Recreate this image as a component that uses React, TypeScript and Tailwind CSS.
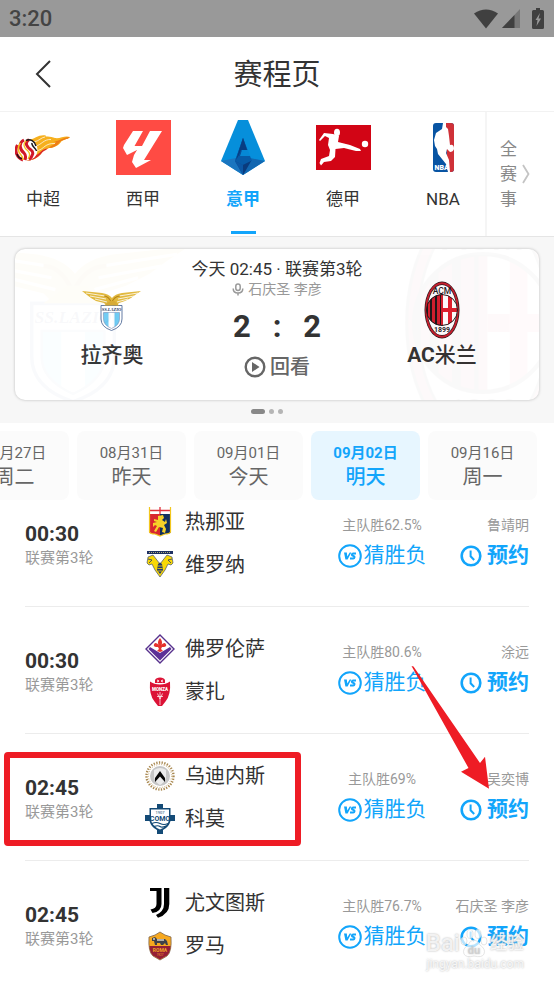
import React, { useState } from 'react';

type IconProps = { className?: string };

/* ---------- league logos ---------- */

const CslLogo = () => (
  <svg viewBox="0 0 56 28" className="w-14 h-7">
    <path d="M13 6 C20 5 24 0 31 1.500 C28 3 36 2 40 4 C45 5 50 1 55 3 C52 6 48 5 46 8 C43 12 38 14 34 14 C31 16 28 15 26 20 C22 24 19 26 12 27 Z" fill="#f6b01e" />
    <path d="M36 7 C43 9 47 3 55 3 C52 6 48 5 45 8 C42 12 38 14 33 14 C38 11 40 10 41 8 Z" fill="#ee7d16" />
    <path d="M21 21 C26 19 26 15 33 14.500 C30 17 28 17 26 20 C22 24 18 26 12 27 Z" fill="#dc2a28" />
    <path d="M21 12 C26 11 29 5 36 5.500 M23 16.500 C29 15 30 9 40 9.500 M19 8 C24 7 26 3.500 30 3" fill="none" stroke="#fff" strokeWidth=".7" />
    <ellipse cx="11.500" cy="16" rx="11" ry="10.500" fill="#fff" />
    <path d="M2.500 11 C-1 17 2 24 8 26 M9 6 C3 9 5 16 9 19 C11 21 11 23 10 26 M14 5.500 C9 9 12 13 16 16 C19 18 18 22 14 25.500" fill="none" stroke="#d1182a" strokeWidth="3" />
    <path d="M5.500 9 C2 13 3 18 6 21 C8 23 8 24 8 26" fill="none" stroke="#f4c01e" strokeWidth="1.500" />
    <path d="M12 6 C7 10 9 14 13 17 C15 19 15 22 13 25" fill="none" stroke="#f4c01e" strokeWidth="1.300" />
    <path d="M11 6.500 C15 4.500 20 7 21 12 M17 9 C16 12 21 14 21.500 17 M2 20 C3 23 5 24.500 7 24.500" fill="none" stroke="#1c1718" strokeWidth="1.500" />
  </svg>
);

const LaLigaLogo = () => (
  <svg viewBox="0 0 55 55" className="size-[55px]">
    <rect width="55" height="55" fill="#ff4b44" />
    <path d="M17 11 H27 L18.500 26 H26 L34 11 H46 L28 40 H35 L20 48 L16 42 L18 35 L21 30 L11 35 L7 28 L8 25 Z" fill="#fff" />
  </svg>
);

const SerieALogo = () => (
  <svg viewBox="0 0 44 55" className="w-11 h-[55px]">
    <path d="M17 0 H27 L44 41 L22 55 L0 41 Z" fill="#068fdb" />
    <path d="M0 41 L15 38 L22 55 Z" fill="#1a75bf" />
    <path d="M44 41 L29 38 L22 55 Z" fill="#1267b1" />
    <path d="M14 41 L22 18 L30 41 L22 55 Z" fill="#0a4b94" />
    <path d="M22 18 L27 31 H20 L18 36 H29 L31 41 L22 45 L14 41 Z" fill="#075ba8" />
    <path d="M22 18 L26 30 H20 L18 35 L15 40 Z" fill="#083d82" />
    <path d="M14 41 L22 45 L22 55 Z" fill="#0b57a5" />
    <path d="M30 41 L22 45 V55 Z" fill="#0a3b7d" />
    <path d="M21 30 H27 L29 36 H19 Z" fill="#0688d5" />
  </svg>
);

const BundesligaLogo = () => (
  <svg viewBox="0 0 55 45" className="w-[55px] h-[45px]">
    <rect width="55" height="45" fill="#d20515" />
    <ellipse cx="21" cy="7.500" rx="3" ry="3.800" fill="#fff" />
    <circle cx="49" cy="19" r="3.200" fill="#fff" />
    <path d="M17 9 L23 11 L22 17 L34 20 L44 24 L45 26 L40 26 L28 23 L19.500 24 L19 32 L15 36 L8 37 L5 40.500 L3.500 38 L5 34 L13 31 L14 25 L12 20 L13 13 L9 11 L4 16 L3 15 L8 8 Z" fill="#fff" />
  </svg>
);

const NbaLogo = () => (
  <svg viewBox="0 0 21 49" className="w-[21px] h-[49px]">
    <rect width="21" height="49" rx="3" fill="#0854a3" />
    <path d="M12 0 H18 Q21 0 21 3 V46 Q21 49 18 49 H15 Z" fill="#cf3138" />
    <path d="M10 0 H13 V4 L15 6 L16 13 L17 22 Q21 21 21 26 Q20 29 17 29 L14 26 L13 30 L16 37 L17 49 H15 L13 41 L5 31 L4 26 L2 23 L1 17 L3 10 L9 6 Z" fill="#fff" />
    <text x="1.500" y="46.500" fontSize="7" fontWeight="900" fill="#fff" fontFamily="Roboto, sans-serif">NBA</text>
  </svg>
);

/* ---------- club crests ---------- */

const LazioCrest = ({ className }: IconProps) => (
  <svg viewBox="0 0 60 40" className={className}>
    <path d="M0 0 L20 2 Q27 3 30 7 Q33 3 40 2 L59 0 L53 4 L49 7 L43 10 L37 12 L34 15 H25 L22 12 L14 10 L9 7 L5 4 Z" fill="#e2b93f" />
    <path d="M4 2 L23 5 M8 5 L24 8 M13 8 L25 11 M56 2 L37 5 M52 5 L36 8 M46 8 L35 11" stroke="#fff" strokeWidth=".8" />
    <path d="M22 5 Q27 5 30 13 M38 5 Q32 5 29 13" stroke="#b8881a" strokeWidth="1.200" fill="none" />
    <path d="M19 14.500 H40 V28 Q40 36 29.500 39.500 Q19 36 19 28 Z" fill="#fff" stroke="#526c98" strokeWidth=".9" />
    <text x="29.500" y="19.500" fontSize="4.500" fontWeight="700" fontStyle="italic" textAnchor="middle" fill="#24365e" fontFamily="Liberation Serif, serif">SS.LAZIO</text>
    <path d="M21.500 21.500 H26.500 V36 Q21.500 33 21.500 28 Z M32.500 21.500 H37.500 V28 Q37.500 33 32.500 36 Z" fill="#6ecbf3" />
    <path d="M21.500 21.500 H37.500 V28 Q37.500 34 29.500 37.500 Q21.500 34 21.500 28 Z" fill="none" stroke="#7b8fb5" strokeWidth=".6" />
    <path d="M22 14.500 L28 10 H33 L37 14.500 Z" fill="#dcae33" />
  </svg>
);

const MilanCrest = ({ className }: IconProps) => (
  <svg viewBox="0 0 36 58" className={className}>
    <ellipse cx="18" cy="29" rx="17.500" ry="28.500" fill="#251a1d" />
    <ellipse cx="18" cy="29" rx="16.800" ry="27.800" fill="#c8202f" />
    <ellipse cx="18" cy="29" rx="15" ry="25.700" fill="#251a1d" />
    <ellipse cx="18" cy="29" rx="14.400" ry="25.100" fill="#fff" />
    <clipPath id="milanDisc">
      <ellipse cx="18" cy="29" rx="15.500" ry="15.500" />
    </clipPath>
    <g clipPath="url(#milanDisc)">
      <rect x="2" y="13" width="17" height="32" fill="#1d1719" />
      <path d="M4 13h2v32h-2z M8 13h3v32h-3z M13 13h3v32h-3z M17 13h2v32h-2z" fill="#d41f2e" />
      <rect x="19" y="13" width="16" height="32" fill="#fff" />
      <path d="M24 13h4v32h-4z M19 27h16v4h-16z" fill="#de1f2f" />
    </g>
    <ellipse cx="18" cy="29" rx="15.500" ry="15.500" fill="none" stroke="#251a1d" strokeWidth="1" />
    <text x="18" y="12.500" fontSize="8.500" fontWeight="500" textAnchor="middle" fill="#251a1d" fontFamily="Roboto, sans-serif">ACM</text>
    <text x="18" y="51" fontSize="7" fontWeight="700" textAnchor="middle" fill="#251a1d" fontFamily="Roboto, sans-serif">1899</text>
  </svg>
);

const GenoaCrest = () => (
  <svg viewBox="0 0 30 30" className="size-[30px]">
    <path d="M4 1 V25 Q5 27 10 27 L15 29 V7 H26 V1" fill="#d8262f" />
    <path d="M4 0 H26 V7 H4 Z" fill="#fff" />
    <path d="M15 7 H26 V25 Q25 27 20 27 L15 29 Z" fill="#12305e" />
    <path d="M4 3.500 H26 M15 0 V7" stroke="#e0303a" strokeWidth="1.300" />
    <path d="M4.500 0 V25 Q5.500 27 10 27 L15 29 L20 27 Q24.500 27 25.500 25 V0" fill="none" stroke="#f2c71f" strokeWidth="1.200" />
    <path d="M13 9 L18 8 L19 11 L17 13 L20 15 L21 12 L22 16 L19 18 L21 22 L20 26 L17 25 L18 21 L14 20 L11 25 L9 24 L12 19 L10 18 L8 20 L8 16 L12 15 L9 14 L9 12 L13 13 Z" fill="#f6d128" />
  </svg>
);

const VeronaCrest = () => (
  <svg viewBox="0 0 30 30" className="size-[30px]">
    <rect x="2" y="1" width="26" height="3" fill="#1f3163" />
    <path d="M4 2.500 H26" stroke="#d7cf8a" strokeWidth=".8" strokeDasharray="1 1" />
    <path d="M3 7 L8 5 L15 14 L22 5 L27 7 L28 13 L26 15 L23 14 L20 20 L15 27 L10 20 L7 14 L4 15 L2 13 Z" fill="#f8d808" stroke="#29396a" strokeWidth=".6" />
    <path d="M13 14 L15 12.500 L17 14 L18 20 L15 24 L12 20 Z" fill="#243870" />
    <path d="M12.500 16 H17.500 M12.500 18.500 H17.500 M13 21 H17" stroke="#f8d808" strokeWidth=".8" />
    <path d="M3 9 L7 10 L4 13 M27 9 L23 10 L26 13" fill="none" stroke="#29396a" strokeWidth=".8" />
  </svg>
);

const FiorentinaCrest = () => (
  <svg viewBox="0 0 30 30" className="size-[30px]">
    <path d="M15 1 L29 15 L15 29 L1 15 Z" fill="#fff" stroke="#56308c" strokeWidth="1.400" />
    <path d="M5 13 L15 19 L25 13 L26.500 15 L15 26.500 L3.500 15 Z" fill="#5c3097" />
    <path d="M15 4 Q18.500 8 16 12 Q17 9 20 9 Q23 12 19 13 H17 L16 15 L18 17 L15 18 L12 17 L14 15 L13 13 H11 Q7 12 10 9 Q13 9 14 12 Q11.500 8 15 4 Z" fill="#e5322d" />
  </svg>
);

const MonzaCrest = () => (
  <svg viewBox="0 0 30 30" className="size-[30px]">
    <path d="M10 3 Q11 .5 15 .5 Q19 .5 20 3 L20 6 H10 Z" fill="#dc1336" />
    <path d="M12 3 L14 4 L12 5 M18 3 L16 4 L18 5" stroke="#fff" strokeWidth=".9" fill="none" />
    <path d="M5 4.500 Q9 7.500 15 7.500 Q21 7.500 25 4.500 Q26 18 20.500 24.500 L17 29 H13 L9.500 24.500 Q4 18 5 4.500 Z" fill="#dc1336" />
    <text x="15" y="13.500" fontSize="4.500" fontWeight="900" textAnchor="middle" fill="#fff" fontFamily="Roboto, sans-serif">MONZA</text>
    <path d="M15 15 V28 M12 19.500 H18 M12.500 16.500 L15 22 L17.500 16.500" stroke="#fff" strokeWidth=".7" fill="none" />
  </svg>
);

const UdineseCrest = () => (
  <svg viewBox="0 0 30 30" className="size-[30px]">
    <circle cx="15" cy="15" r="13.500" fill="none" stroke="#a98850" strokeWidth="2.400" strokeDasharray="1.300 1.400" />
    <circle cx="15" cy="15" r="11.500" fill="none" stroke="#c8ad7b" strokeWidth="1" strokeDasharray="1 1.500" />
    <circle cx="15" cy="15" r="10" fill="#c6c6c6" />
    <path d="M9 9 Q15 5 21 9 V17 Q19 22 15 24 Q11 22 9 17 Z" fill="#ececec" />
    <path d="M15 10 L20 17 V21 L15 15.500 L10 21 V17 Z" fill="#080808" />
  </svg>
);

const ComoCrest = () => (
  <svg viewBox="0 0 30 30" className="size-[30px]">
    <path d="M12 0 H18 V4 H25.500 V11 H30 V17 H25.500 Q24 23 18 26 V30 H12 V26 Q6 23 4.500 17 H0 V11 H4.500 V4 H12 Z" fill="#134a76" />
    <path d="M6 5.500 H24 V16 Q23 22 15 25.500 Q7 22 6 16 Z" fill="#fff" />
    <text x="15" y="9.500" fontSize="4" textAnchor="middle" fill="#134a76" fontFamily="Roboto, sans-serif">1907</text>
    <text x="15" y="17" fontSize="7" fontWeight="700" textAnchor="middle" fill="#134a76" fontFamily="Roboto, sans-serif">COMO</text>
    <path d="M7 19.500 Q11 17.500 15 19.500 T23 19.500 M9 22.500 Q13 21 15 22.500 T21 22" stroke="#134a76" strokeWidth="1.200" fill="none" />
  </svg>
);

const JuventusCrest = () => (
  <svg viewBox="0 0 30 30" className="size-[30px]">
    <path d="M5 0 H16.500 V16 Q16.500 23.500 7.500 25 L5.500 21.500 Q11.500 20.500 11.500 16 V3 H5 Z" fill="#000" />
    <path d="M19 0 H24.300 V16 Q24.300 26 13 29.800 L11 27 Q19 23.500 19 16 Z" fill="#000" />
  </svg>
);

const RomaCrest = () => (
  <svg viewBox="0 0 30 30" className="size-[30px]">
    <path d="M4 6 L10 4 L15 1 L20 4 L26 6 Q27 21 22 25 L15 29 L8 25 Q3 21 4 6 Z" fill="#f6a81f" stroke="#7e6650" strokeWidth=".8" />
    <path d="M4.400 15 H25.600 Q25 22 22 24.500 L15 28.400 L8 24.500 Q5 22 4.400 15 Z" fill="#951f36" />
    <path d="M7 7 L10 6 L12 8 L20 8 L22 10 L23 14 H21 L20 12 L18 14 H16 L15 12 L12 12 L12 14 H10 L9 10 L7 10 Z" fill="#3f4149" />
    <path d="M12 9 H19 M8 8 L10 8" stroke="#d9d4ca" strokeWidth="1.300" />
    <text x="15" y="20.500" fontSize="5" fontWeight="700" textAnchor="middle" fill="#f0a526" fontFamily="Roboto, sans-serif">ROMA</text>
    <text x="15" y="25" fontSize="3" textAnchor="middle" fill="#f0a526" fontFamily="Roboto, sans-serif">1927</text>
  </svg>
);

/* ---------- small icons ---------- */

const VsIcon = () => (
  <svg viewBox="0 0 24 24" className="size-6 shrink-0">
    <circle cx="12" cy="12" r="10.800" fill="none" stroke="#12a5fb" strokeWidth="2" />
    <path d="M6 8.500 H8.800 L9.300 12.500 L11.700 8.500 H13.300 L9.600 15.500 H7.400 Z" fill="#12a5fb" />
    <path d="M18 9.500 H15.200 Q14 9.500 13.900 10.600 Q13.800 11.500 15 11.800 L15.600 12 Q16.700 12.300 16.500 13.300 Q16.300 14.400 15.200 14.400 H12" fill="none" stroke="#12a5fb" strokeWidth="2" />
  </svg>
);

const ClockIcon = () => (
  <svg viewBox="0 0 22 22" className="size-[22px] shrink-0">
    <circle cx="11" cy="11" r="9.300" fill="none" stroke="#12a5fb" strokeWidth="2.600" />
    <path d="M10.600 5.500 V11.300 L14.200 15" fill="none" stroke="#12a5fb" strokeWidth="2" />
  </svg>
);

const PlayIcon = () => (
  <svg viewBox="0 0 22 22" className="size-[22px]">
    <circle cx="11" cy="11" r="9.300" fill="none" stroke="#666" strokeWidth="2.400" />
    <path d="M8 6 L15.500 11 L8 16 Z" fill="#666" />
  </svg>
);

const MicIcon = () => (
  <svg viewBox="0 0 12 13" className="w-3 h-[13px]" fill="none" stroke="#999" strokeWidth="1.500">
    <rect x="3.800" y="1" width="4.400" height="6.500" rx="2.200" />
    <path d="M1.200 5.500 Q1.200 10 6 10 Q10.800 10 10.800 5.500 M6 10 V12.500" />
  </svg>
);

const leagues = [
  { id: 'csl', name: '中超', Logo: CslLogo },
  { id: 'laliga', name: '西甲', Logo: LaLigaLogo },
  { id: 'seriea', name: '意甲', Logo: SerieALogo },
  { id: 'bundesliga', name: '德甲', Logo: BundesligaLogo },
  { id: 'nba', name: 'NBA', Logo: NbaLogo }
];

const dates = [
  { date: '08月27日', day: '周二' },
  { date: '08月31日', day: '昨天' },
  { date: '09月01日', day: '今天' },
  { date: '09月02日', day: '明天' },
  { date: '09月16日', day: '周一' }
];

const matches = [
  {
    time: '00:30',
    home: { name: '热那亚', Crest: GenoaCrest },
    away: { name: '维罗纳', Crest: VeronaCrest },
    odds: '主队胜62.5%',
    host: '鲁靖明'
  },
  {
    time: '00:30',
    home: { name: '佛罗伦萨', Crest: FiorentinaCrest },
    away: { name: '蒙扎', Crest: MonzaCrest },
    odds: '主队胜80.6%',
    host: '涂远'
  },
  {
    time: '02:45',
    home: { name: '乌迪内斯', Crest: UdineseCrest },
    away: { name: '科莫', Crest: ComoCrest },
    odds: '主队胜69%',
    host: '吴奕博',
    marked: true
  },
  {
    time: '02:45',
    home: { name: '尤文图斯', Crest: JuventusCrest },
    away: { name: '罗马', Crest: RomaCrest },
    odds: '主队胜76.7%',
    host: '石庆圣 李彦'
  }
];

const StatusBar = () => (
  <div className="flex items-center justify-between h-[37px] bg-[#999] pl-[9px] pr-[10px]">
    <span className="text-[22px] font-medium text-[#444]">3:20</span>
    <div className="flex items-center">
      <svg viewBox="0 0 24 20" className="w-6 h-5" fill="#404040">
        <path d="M0 4.500 Q12 -3.500 24 4.500 L12 19.500 Z" />
      </svg>
      <svg viewBox="0 0 18 19" className="w-[18px] h-[19px] ml-1">
        <path d="M18 0 V19 H0 Z" fill="#777" />
        <path d="M12.500 6 V19 H0 Z" fill="#404040" />
      </svg>
      <svg viewBox="0 0 12 21" className="w-3 h-[21px] ml-3">
        <path d="M4 0 H8 V2 H10.500 Q12 2 12 3.500 V19.500 Q12 21 10.500 21 H1.500 Q0 21 0 19.500 V3.500 Q0 2 1.500 2 H4 Z" fill="#404040" />
        <path d="M8 5 L3.500 12 H5.500 L4.500 18 L9 10.500 H6.500 Z" fill="#999" />
      </svg>
    </div>
  </div>
);

const Watermark = () => (
  <div className="absolute right-[30px] bottom-[14px] text-white/80 [text-shadow:0_0_2px_#aaa] text-right pointer-events-none">
    <div className="flex items-center justify-end text-[24px] leading-6 font-medium">
      <span>Bai</span>
      <svg viewBox="0 0 28 30" className="w-7 h-[30px]" fill="#fff" fillOpacity=".7" stroke="#d4d4d4" strokeWidth=".6">
        <ellipse cx="4" cy="13" rx="3" ry="4" />
        <ellipse cx="10" cy="6" rx="3" ry="4.500" />
        <ellipse cx="18" cy="6" rx="3" ry="4.500" />
        <ellipse cx="24" cy="13" rx="3" ry="4" />
        <path d="M14 12 Q18 12 20 17 Q26 21 24 26 Q22 30 14 28 Q6 30 4 26 Q2 21 8 17 Q10 12 14 12 Z" />
        <text x="14" y="26" fontSize="11" fontWeight="700" textAnchor="middle" fill="#ccc" stroke="none" fontFamily="Roboto, sans-serif">du</text>
      </svg>
      <span className="text-[17px] ml-0.5">经验</span>
    </div>
    <div className="text-xs leading-3">jingyan.baidu.com</div>
  </div>
);

const App = () => {
  const [activeLeague, setActiveLeague] = useState('seriea');
  const [activeDate, setActiveDate] = useState('09月02日');

  return (
    <div className="relative min-h-screen max-h-screen overflow-hidden bg-white text-[#333] font-['Roboto','Noto_Sans_CJK_SC',sans-serif]">
      <StatusBar />

      {/* Header */}
      <header className="grid grid-cols-[86px_1fr_86px] items-center h-[75px] border-b border-[#f2f2f2]">
        <button aria-label="返回" className="h-full flex items-center justify-center">
          <svg viewBox="0 0 16 28" className="w-4 h-7" fill="none" stroke="#333" strokeWidth="2">
            <path d="M15 1 L2 14 L15 27" />
          </svg>
        </button>
        <h1 className="text-[29px] text-center pt-1">赛程页</h1>
      </header>

      {/* Leagues */}
      <nav className="flex h-[125px] border-b border-[#e5e5e5]">
        <div className="flex flex-1 overflow-hidden">
          <div className="flex -ml-[7px]">
            {leagues.map(({ id, name, Logo }) => (
              <button
                key={id}
                onClick={() => setActiveLeague(id)}
                className={`flex flex-col items-center justify-start w-[100px] shrink-0 ${activeLeague === id ? 'text-[#12a5fb] font-bold' : ''}`}
              >
                <span className="flex items-center h-[71px]">
                  <Logo />
                </span>
                <span className="text-[17px] leading-8">{name}</span>
                <span className={`mt-4 w-[25px] h-[3px] ${activeLeague === id ? 'bg-[#12a5fb]' : ''}`} />
              </button>
            ))}
          </div>
        </div>
        <button className="flex items-center gap-[5px] w-[69px] pl-[13px] text-[17px] leading-[25px] text-[#888] border-l-2 border-[#f5f5f5]">
          <span className="w-[17px]">全赛事</span>
          <svg viewBox="0 0 8 20" className="w-2 h-5" fill="none" stroke="#c4c4c4" strokeWidth="1.800">
            <path d="M1 1 L6.500 10 L1 19" />
          </svg>
        </button>
      </nav>

      {/* Featured match */}
      <section className="bg-[#f7f7f7] px-[15px] pt-3 h-[186px]">
        <div className="relative flex h-[151px] bg-white rounded-[10px] overflow-hidden shadow-[0_0_3px_rgba(0,0,0,0.25)]">
          <LazioCrest className="absolute -left-[58px] -top-1 w-[236px] h-[160px] max-w-none opacity-[0.03]" />
          <MilanCrest className="absolute -right-6 -top-14 w-[160px] h-[260px] max-w-none opacity-[0.02]" />
          <div className="flex flex-1 flex-col items-center justify-end pl-[17px] pb-[29px]">
            <LazioCrest className="w-[60px] h-10 mb-2" />
            <div className="text-[21px] leading-8 font-medium">拉齐奥</div>
          </div>
          <div className="flex flex-col items-center w-[170px] shrink-0 whitespace-nowrap pt-2">
            <div className="text-[17px] leading-6">今天 02:45 · 联赛第3轮</div>
            <div className="flex items-center gap-1 text-sm leading-4 text-[#999]">
              <MicIcon />
              石庆圣 李彦
            </div>
            <div className="flex justify-between w-[88px] mt-2.5 mb-2 text-[31px] leading-10 font-bold">
              <span>2</span>
              <span>:</span>
              <span>2</span>
            </div>
            <button className="flex items-center gap-1 text-xl leading-6 font-medium text-[#666]">
              <PlayIcon />
              回看
            </button>
          </div>
          <div className="flex flex-1 flex-col items-center justify-end pr-[17px] pb-[29px]">
            <MilanCrest className="w-9 h-[58px]" />
            <div className="text-[21px] leading-8 font-medium">
              <span className="font-bold">AC</span>米兰
            </div>
          </div>
        </div>
        <div className="flex justify-center items-center gap-1 mt-[9px] pr-5">
          <span className="w-3.5 h-[5px] rounded-full bg-[#888]" />
          <span className="size-[5px] rounded-full bg-[#b5b5b5]" />
          <span className="size-[5px] rounded-full bg-[#b5b5b5]" />
        </div>
      </section>

      {/* Dates */}
      <div className="relative flex justify-end gap-2 pt-2 pr-[17px] overflow-hidden bg-white">
        {dates.map(({ date, day }) => (
          <button
            key={date}
            onClick={() => setActiveDate(date)}
            className={`flex flex-col items-center justify-center w-[109px] h-[69px] pb-0.5 shrink-0 rounded-lg ${
              activeDate === date ? 'bg-[#e7f6ff] text-[#12a5fb]' : 'bg-[#fbfbfb] text-[#666]'
            }`}
          >
            <span className={`text-[15px] leading-6 ${activeDate === date ? 'font-bold' : ''}`}>{date}</span>
            <span className={`text-xl leading-6 ${activeDate === date ? 'font-medium' : ''}`}>{day}</span>
          </button>
        ))}
      </div>

      {/* Matches */}
      <ul className="-mt-5">
        {matches.map(({ time, home, away, odds, host, marked }) => (
          <li key={home.name} className="relative px-[25px]">
            <div className="flex h-[127px] border-b border-[#ececec]">
              <div className="w-[120px] pt-[42px]">
                <div className="text-[21px] leading-6 font-bold">{time}</div>
                <div className="text-[15px] leading-6 text-[#999]">联赛第3轮</div>
              </div>
              <div className="flex-1 pt-5">
                {[home, away].map(({ name, Crest }) => (
                  <div key={name} className="flex items-center gap-2.5 h-[43px] text-xl">
                    <Crest />
                    {name}
                  </div>
                ))}
              </div>
              <div className="flex flex-col items-center w-[90px] mr-8 pt-[31px] whitespace-nowrap">
                <div className="text-sm leading-7 text-[#999]">{odds}</div>
                <button className="flex items-center gap-0.5 h-[34px] text-[21px] text-[#12a5fb]">
                  <VsIcon />
                  猜胜负
                </button>
              </div>
              <div className="flex flex-col items-end w-[70px] pt-[31px] whitespace-nowrap">
                <div className="text-sm leading-7 text-[#999]">{host}</div>
                <button className="flex items-center gap-[5px] h-[34px] text-[21px] font-bold text-[#12a5fb]">
                  <ClockIcon />
                  预约
                </button>
              </div>
            </div>
            {marked && <div className="absolute left-1 top-[18px] w-[297px] h-[94px] border-6 border-[#ee1c25] rounded" />}
            {marked && (
              <svg viewBox="0 0 80 124" className="absolute right-[64px] -top-[69px] w-20 h-[124px] pointer-events-none">
                <path d="M1.500 1 L3.500 1.500 L70 98 L75 91.700 L79 123.700 L51 106.700 L58.500 103 Z" fill="#ee1c25" />
              </svg>
            )}
          </li>
        ))}
      </ul>

      <Watermark />
    </div>
  );
};

export default App;
